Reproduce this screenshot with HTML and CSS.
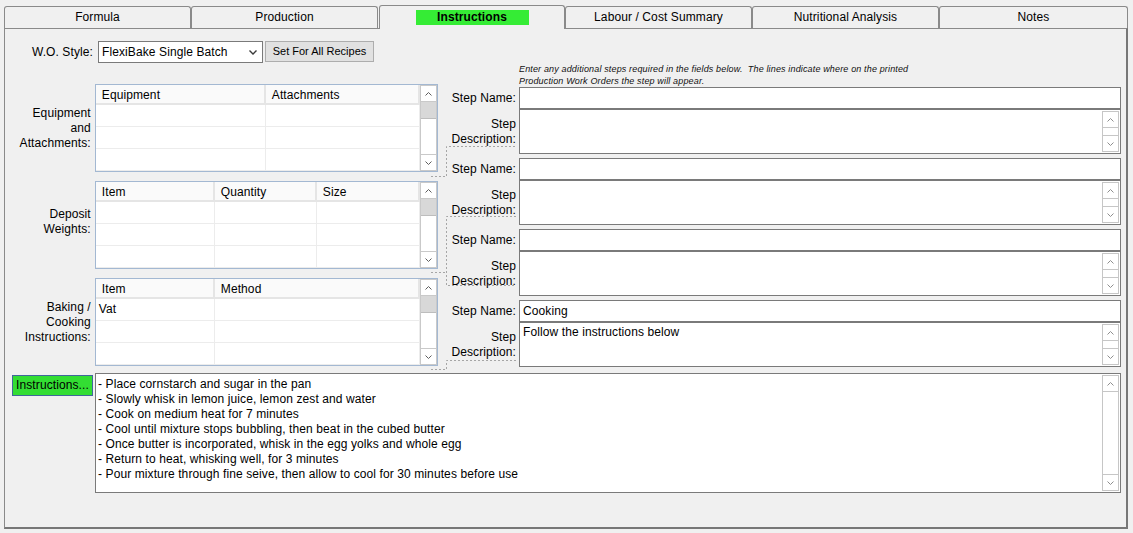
FILE: index.html
```html
<!DOCTYPE html>
<html>
<head>
<meta charset="utf-8">
<title>Instructions</title>
<link rel="stylesheet" href="styles.css">
</head>
<body>
<div class="tabs">
  <div class="tab">Formula</div>
  <div class="tab">Production</div>
  <div class="tab tab-active"><span class="tab-hl">Instructions</span></div>
  <div class="tab">Labour / Cost Summary</div>
  <div class="tab">Nutritional Analysis</div>
  <div class="tab tab-last">Notes</div>
</div>

<div class="panel">
  <div class="wo-row">
    <div class="wo-label">W.O. Style:</div>
    <div class="select"><span>FlexiBake Single Batch</span><svg class="sel-chev" width="8" height="5" viewBox="0 0 8 5"><path d="M0.5 0.5L4 4L7.5 0.5"/></svg></div>
    <div class="btn">Set For All Recipes</div>
  </div>

  <div class="main">
    <div class="left-col">
      <div class="grid-row">
        <div class="side-label">Equipment<br>and<br>Attachments:</div>
        <div class="grid">
          <div class="grid-body">
            <div class="g-row g-head cols-eq"><div class="c">Equipment</div><div class="c">Attachments</div></div>
            <div class="g-row cols-eq"><div class="c"></div><div class="c"></div></div>
            <div class="g-row cols-eq"><div class="c"></div><div class="c"></div></div>
            <div class="g-row cols-eq"><div class="c"></div><div class="c"></div></div>
          </div>
          <div class="vscroll">
            <div class="sb-btn sb-up"><svg class="chev" width="7" height="4" viewBox="0 0 7 4"><path d="M0.5 3.5L3.5 0.5L6.5 3.5"/></svg></div>
            <div class="sb-thumb"></div>
            <div class="sb-btn sb-down"><svg class="chev" width="7" height="4" viewBox="0 0 7 4"><path d="M0.5 0.5L3.5 3.5L6.5 0.5"/></svg></div>
          </div>
        </div>
      </div>

      <div class="grid-row">
        <div class="side-label side-label-up">Deposit<br>Weights:</div>
        <div class="grid">
          <div class="grid-body">
            <div class="g-row g-head cols-dep"><div class="c">Item</div><div class="c">Quantity</div><div class="c">Size</div></div>
            <div class="g-row cols-dep"><div class="c"></div><div class="c"></div><div class="c"></div></div>
            <div class="g-row cols-dep"><div class="c"></div><div class="c"></div><div class="c"></div></div>
            <div class="g-row cols-dep"><div class="c"></div><div class="c"></div><div class="c"></div></div>
          </div>
          <div class="vscroll">
            <div class="sb-btn sb-up"><svg class="chev" width="7" height="4" viewBox="0 0 7 4"><path d="M0.5 3.5L3.5 0.5L6.5 3.5"/></svg></div>
            <div class="sb-thumb"></div>
            <div class="sb-btn sb-down"><svg class="chev" width="7" height="4" viewBox="0 0 7 4"><path d="M0.5 0.5L3.5 3.5L6.5 0.5"/></svg></div>
          </div>
        </div>
      </div>

      <div class="grid-row">
        <div class="side-label">Baking /<br>Cooking<br>Instructions:</div>
        <div class="grid">
          <div class="grid-body">
            <div class="g-row g-head cols-bake"><div class="c">Item</div><div class="c">Method</div></div>
            <div class="g-row cols-bake"><div class="c">Vat</div><div class="c"></div></div>
            <div class="g-row cols-bake"><div class="c"></div><div class="c"></div></div>
            <div class="g-row cols-bake"><div class="c"></div><div class="c"></div></div>
          </div>
          <div class="vscroll">
            <div class="sb-btn sb-up"><svg class="chev" width="7" height="4" viewBox="0 0 7 4"><path d="M0.5 3.5L3.5 0.5L6.5 3.5"/></svg></div>
            <div class="sb-thumb"></div>
            <div class="sb-btn sb-down"><svg class="chev" width="7" height="4" viewBox="0 0 7 4"><path d="M0.5 0.5L3.5 3.5L6.5 0.5"/></svg></div>
          </div>
        </div>
      </div>
    </div>

    <div class="right-col">
      <div class="note">Enter any additional steps required in the fields below.&nbsp; The lines indicate where on the printed<br>Production Work Orders the step will appear.</div>

      <div class="step">
        <div class="step-line">
          <div class="step-label">Step Name:</div>
          <div class="name-input"></div>
        </div>
        <div class="step-line">
          <div class="step-label">Step<br>Description:</div>
          <div class="desc">
            <div class="desc-text"></div>
            <div class="vscroll light">
              <div class="sb-btn sb-up"><svg class="chev" width="7" height="4" viewBox="0 0 7 4"><path d="M0.5 3.5L3.5 0.5L6.5 3.5"/></svg></div>
              <div class="sb-btn sb-down"><svg class="chev" width="7" height="4" viewBox="0 0 7 4"><path d="M0.5 0.5L3.5 3.5L6.5 0.5"/></svg></div>
            </div>
          </div>
        </div>
      </div>

      <div class="step">
        <div class="step-line">
          <div class="step-label">Step Name:</div>
          <div class="name-input"></div>
        </div>
        <div class="step-line">
          <div class="step-label">Step<br>Description:</div>
          <div class="desc">
            <div class="desc-text"></div>
            <div class="vscroll light">
              <div class="sb-btn sb-up"><svg class="chev" width="7" height="4" viewBox="0 0 7 4"><path d="M0.5 3.5L3.5 0.5L6.5 3.5"/></svg></div>
              <div class="sb-btn sb-down"><svg class="chev" width="7" height="4" viewBox="0 0 7 4"><path d="M0.5 0.5L3.5 3.5L6.5 0.5"/></svg></div>
            </div>
          </div>
        </div>
      </div>

      <div class="step">
        <div class="step-line">
          <div class="step-label">Step Name:</div>
          <div class="name-input"></div>
        </div>
        <div class="step-line">
          <div class="step-label">Step<br>Description:</div>
          <div class="desc">
            <div class="desc-text"></div>
            <div class="vscroll light">
              <div class="sb-btn sb-up"><svg class="chev" width="7" height="4" viewBox="0 0 7 4"><path d="M0.5 3.5L3.5 0.5L6.5 3.5"/></svg></div>
              <div class="sb-btn sb-down"><svg class="chev" width="7" height="4" viewBox="0 0 7 4"><path d="M0.5 0.5L3.5 3.5L6.5 0.5"/></svg></div>
            </div>
          </div>
        </div>
      </div>

      <div class="step">
        <div class="step-line">
          <div class="step-label">Step Name:</div>
          <div class="name-input">Cooking</div>
        </div>
        <div class="step-line">
          <div class="step-label">Step<br>Description:</div>
          <div class="desc">
            <div class="desc-text">Follow the instructions below</div>
            <div class="vscroll light">
              <div class="sb-btn sb-up"><svg class="chev" width="7" height="4" viewBox="0 0 7 4"><path d="M0.5 3.5L3.5 0.5L6.5 3.5"/></svg></div>
              <div class="sb-btn sb-down"><svg class="chev" width="7" height="4" viewBox="0 0 7 4"><path d="M0.5 0.5L3.5 3.5L6.5 0.5"/></svg></div>
            </div>
          </div>
        </div>
      </div>
    </div>
  </div>

  <div class="instr-row">
    <div class="instr-btn">Instructions...</div>
    <div class="instr-box">
      <div class="instr-text">- Place cornstarch and sugar in the pan<br>- Slowly whisk in lemon juice, lemon zest and water<br>- Cook on medium heat for 7 minutes<br>- Cool until mixture stops bubbling, then beat in the cubed butter<br>- Once butter is incorporated, whisk in the egg yolks and whole egg<br>- Return to heat, whisking well, for 3 minutes<br>- Pour mixture through fine seive, then allow to cool for 30 minutes before use</div>
      <div class="vscroll light">
        <div class="sb-btn sb-up"><svg class="chev" width="7" height="4" viewBox="0 0 7 4"><path d="M0.5 3.5L3.5 0.5L6.5 3.5"/></svg></div>
        <div class="sb-btn sb-down"><svg class="chev" width="7" height="4" viewBox="0 0 7 4"><path d="M0.5 0.5L3.5 3.5L6.5 0.5"/></svg></div>
      </div>
    </div>
  </div>
</div>

<svg class="connectors" width="1133" height="533" viewBox="0 0 1133 533">
  <path d="M431 176.5H446.5V146.5H516"/>
  <path d="M431 272.5H446.5"/>
  <path d="M516 216.5H446.5V285.5H516"/>
  <path d="M431 369.5H446.5V360.5H516"/>
</svg>
</body>
</html>
```

FILE: styles.css
```css
html, body {
  margin: 0;
  padding: 0;
}

body {
  position: relative;
  width: 1133px;
  height: 533px;
  overflow: hidden;
  background: #f0f0f0;
  font-family: "Liberation Sans", Arial, sans-serif;
  font-size: 12px;
  letter-spacing: 0.1px;
  color: #000;
}

/* ---------- tabs ---------- */
.tabs {
  display: flex;
  align-items: flex-end;
  height: 28px;
  padding-left: 4px;
  box-sizing: border-box;
}

.tab {
  width: 187px;
  height: 22px;
  box-sizing: border-box;
  border: 1px solid #8a8a8a;
  border-bottom: none;
  border-radius: 3px 3px 0 0;
  background: #f0f0f0;
  display: flex;
  align-items: center;
  justify-content: center;
  line-height: 14px;
  padding-bottom: 2px;
}

.tab-active {
  width: 186px;
  height: 24px;
  margin-left: 1px;
  margin-bottom: -1px;
  padding-bottom: 1px;
  position: relative;
  z-index: 1;
}

.tab-last {
  width: 189px;
}

.tab-hl {
  width: 113px;
  height: 15px;
  background: #35ec35;
  font-weight: bold;
  display: flex;
  align-items: center;
  justify-content: center;
}

/* ---------- panel ---------- */
.panel {
  margin-left: 4px;
  width: 1124px;
  height: 501px;
  box-sizing: border-box;
  border: 1px solid #8a8a8a;
  border-right: 2px solid #777;
  border-bottom: 2px solid #777;
  padding-top: 12px;
}

.wo-row {
  display: flex;
  align-items: flex-start;
  height: 22px;
}

.wo-label {
  width: 88px;
  margin-right: 5px;
  text-align: right;
  line-height: 22px;
}

.select {
  width: 165px;
  height: 22px;
  box-sizing: border-box;
  border: 1px solid #7a7a7a;
  background: #fff;
  display: flex;
  align-items: center;
  justify-content: space-between;
  padding: 0 5px 0 3px;
  margin-right: 2px;
}

.sel-chev path {
  fill: none;
  stroke: #3a3a3a;
  stroke-width: 1.4;
}

.btn {
  width: 109px;
  height: 21px;
  box-sizing: border-box;
  border: 1px solid #adadad;
  background: #e1e1e1;
  font-size: 11px;
  letter-spacing: 0;
  line-height: 19px;
  text-align: center;
}

/* ---------- main two columns ---------- */
.main {
  display: flex;
  gap: 8px;
}

.left-col {
  width: 433px;
  padding-top: 21px;
}

.grid-row {
  display: flex;
  align-items: center;
  height: 88px;
}

.grid-row + .grid-row {
  margin-top: 9px;
}

.side-label {
  width: 86px;
  margin-right: 4px;
  text-align: right;
  line-height: 15px;
}

.side-label-up {
  margin-bottom: 6px;
}

.grid {
  width: 344px;
  height: 88px;
  box-sizing: border-box;
  border: 1px solid #a3b8d2;
  background: #fff;
  display: flex;
}

.grid-body {
  flex: 1;
  display: flex;
  flex-direction: column;
}

.g-row {
  display: grid;
  height: 22px;
  box-sizing: border-box;
  border-bottom: 1px solid #ececec;
}

.g-row .c {
  border-right: 1px solid #ececec;
  padding-left: 3px;
  line-height: 21px;
  overflow: hidden;
  white-space: nowrap;
}

.g-head {
  height: 20px;
  background: #fafafa;
  border-bottom: 2px solid #e5e5e5;
}

.g-head .c {
  border-right: 2px solid #e5e5e5;
  padding-left: 6px;
  padding-top: 1px;
  line-height: 18px;
}

.cols-eq { grid-template-columns: 170px 1fr; }
.cols-dep { grid-template-columns: 119px 102px 1fr; }
.cols-bake { grid-template-columns: 119px 1fr; }

/* ---------- scrollbars ---------- */
.vscroll {
  width: 17px;
  box-sizing: border-box;
  border: 1px solid #c9c9c9;
  background: #fff;
  display: flex;
  flex-direction: column;
}

.sb-btn {
  height: 15px;
  display: flex;
  align-items: center;
  justify-content: center;
  flex-shrink: 0;
}

.sb-up {
  border-bottom: 1px solid #c9c9c9;
}

.sb-down {
  margin-top: auto;
  border-top: 1px solid #c9c9c9;
}

.sb-thumb {
  height: 17px;
  box-sizing: border-box;
  background: #d8d8d8;
  border-bottom: 1px solid #bdbdbd;
}

.chev path {
  fill: none;
  stroke: #5e5e5e;
  stroke-width: 1;
}

.vscroll.light {
  margin: 1px;
  border-color: #c6c6c6;
}

.vscroll.light .sb-up {
  border-bottom-color: #c6c6c6;
}

.vscroll.light .sb-down {
  border-top-color: #c6c6c6;
}

.vscroll.light .chev path {
  stroke: #8e8e8e;
}

/* ---------- steps ---------- */
.right-col {
  width: 675px;
}

.note {
  height: 24px;
  box-sizing: border-box;
  padding-left: 73px;
  font-size: 9px;
  font-style: italic;
  letter-spacing: 0.15px;
  line-height: 12px;
  white-space: nowrap;
  color: #111;
}

.step {
  margin-bottom: 4px;
}

.step:last-child {
  margin-bottom: 0;
}

.step-line {
  display: flex;
}

.step-label {
  width: 70px;
  margin-right: 3px;
  text-align: right;
  line-height: 15px;
  display: flex;
  flex-direction: column;
  justify-content: center;
  align-items: flex-end;
}

.name-input {
  width: 602px;
  height: 22px;
  box-sizing: border-box;
  border: 1px solid #7a7a7a;
  background: #fff;
  padding-left: 3px;
  line-height: 20px;
}

.desc {
  width: 602px;
  height: 45px;
  box-sizing: border-box;
  border: 1px solid #7a7a7a;
  background: #fff;
  display: flex;
}

.desc-text {
  flex: 1;
  padding: 2px 3px 0 3px;
  line-height: 15px;
}

/* ---------- instructions ---------- */
.instr-row {
  display: flex;
  align-items: flex-start;
  margin-top: 6px;
  padding-left: 7px;
}

.instr-btn {
  width: 81px;
  height: 21px;
  box-sizing: border-box;
  margin-top: 2px;
  margin-right: 2px;
  background: #33dd33;
  border: 1px solid #41679a;
  line-height: 19px;
  text-align: center;
}

.instr-box {
  width: 1026px;
  height: 120px;
  box-sizing: border-box;
  border: 1px solid #7a7a7a;
  background: #fff;
  display: flex;
}

.instr-text {
  flex: 1;
  padding: 3px 0 0 2px;
  line-height: 15px;
  white-space: nowrap;
}

/* ---------- dashed connector lines (overlay) ---------- */
.connectors {
  position: absolute;
  left: 0;
  top: 0;
  pointer-events: none;
}

.connectors path {
  fill: none;
  stroke: #a6a6a6;
  stroke-width: 1;
  stroke-dasharray: 2 2;
}
```
